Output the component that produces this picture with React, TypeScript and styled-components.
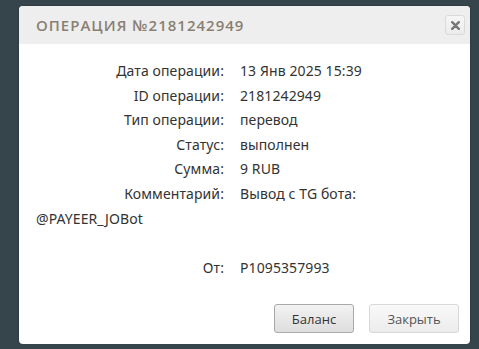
import styled, { createGlobalStyle } from "styled-components";

type Field = {
  label: string;
  value: string;
};

const fields: Field[] = [
  { label: "Дата операции:", value: "13 Янв 2025 15:39" },
  { label: "ID операции:", value: "2181242949" },
  { label: "Тип операции:", value: "перевод" },
  { label: "Статус:", value: "выполнен" },
  { label: "Сумма:", value: "9 RUB" },
];

const GlobalStyle = createGlobalStyle`
  html, body {
    margin: 0;
    padding: 0;
    background: #36444c;
  }
`;

const App = () => {
  return (
    <>
      <GlobalStyle />
      <SPage>
        <SDialog>
          <SHeader>
            <STitle>Операция №2181242949</STitle>
            <SClose aria-label="close">
              <svg width="9" height="9" viewBox="0 0 9 9">
                <path d="M1.2 1.2 L7.8 7.8 M7.8 1.2 L1.2 7.8" stroke="#777777" strokeWidth="2.4" strokeLinecap="round" />
              </svg>
            </SClose>
          </SHeader>
          <SBody>
            {fields.map((f) => (
              <SRow key={f.label}>
                <SLabel>{f.label}</SLabel>
                <SValue>{f.value}</SValue>
              </SRow>
            ))}
            <SRow>
              <SLabel>Комментарий:</SLabel>
              <SValue>Вывод с TG бота: @PAYEER_JOBot</SValue>
            </SRow>
            <SSpacer />
            <SRow>
              <SLabel>От:</SLabel>
              <SValue>P1095357993</SValue>
            </SRow>
          </SBody>
          <SFooter>
            <SButton>Баланс</SButton>
            <SButton muted>Закрыть</SButton>
          </SFooter>
        </SDialog>
      </SPage>
    </>
  );
};

const SPage = styled.div`
  padding: 6px 0 0 19px;
`;

const SDialog = styled.div`
  width: 451px;
  height: 338px;
  background: #ffffff;
  border-radius: 4px;
  overflow: hidden;
  display: flex;
  flex-direction: column;
  box-shadow: 0 0 2px rgba(0, 0, 0, 0.3);
`;

const SHeader = styled.div`
  height: 38px;
  background: #eeeeee;
  display: flex;
  align-items: center;
  justify-content: space-between;
  padding: 0 5px 0 17px;
`;

const STitle = styled.span`
  font-family: "Open Sans", "Liberation Sans", sans-serif;
  font-size: 15px;
  font-weight: 600;
  letter-spacing: 1px;
  text-transform: uppercase;
  color: #8a7f72;
`;

const SClose = styled.button`
  width: 20px;
  height: 20px;
  padding: 0;
  display: flex;
  align-items: center;
  justify-content: center;
  border: 1px solid #dadada;
  border-radius: 3px;
  background: linear-gradient(#f6f6f6, #ebebeb);
`;

const SBody = styled.div`
  padding: 15px 17px 0 17px;
  font-family: "Noto Sans", "Open Sans", sans-serif;
  font-size: 14px;
  letter-spacing: 0.1px;
  color: #333333;
  line-height: 24.6px;
`;

const SRow = styled.div`
  display: block;
`;

const SLabel = styled.span`
  display: inline-block;
  width: 188px;
  margin-right: 16px;
  text-align: right;
  white-space: nowrap;
`;

const SValue = styled.span``;

const SSpacer = styled.div`
  height: 24.6px;
`;

const SFooter = styled.div`
  margin-top: auto;
  display: flex;
  justify-content: flex-end;
  gap: 15px;
  padding: 0 11px 11px 0;
`;

const SButton = styled.button<{ muted?: boolean }>`
  height: 29px;
  padding: 0 14px;
  min-width: ${({ muted }) => (muted ? "90px" : "80px")};
  font-family: "Open Sans", "Liberation Sans", sans-serif;
  font-size: 13px;
  color: ${({ muted }) => (muted ? "#555555" : "#333333")};
  border: 1px solid ${({ muted }) => (muted ? "#d8d8d8" : "#a9a9a9")};
  border-radius: 3px;
  background: ${({ muted }) =>
    muted ? "linear-gradient(#f9f9f9, #ececec)" : "linear-gradient(#f2f2f2, #dedede)"};
`;

export default App;
